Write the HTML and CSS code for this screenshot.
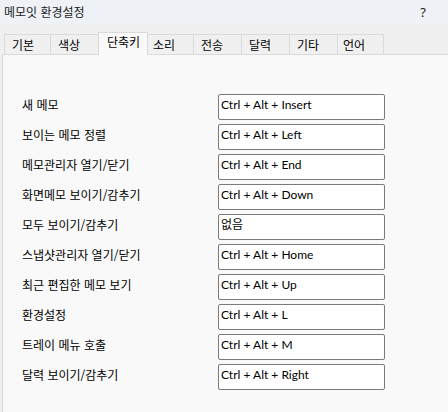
FILE: index.html
```html
<!DOCTYPE html>
<html lang="ko">
<head>
<meta charset="utf-8">
<title>메모잇 환경설정</title>
<link rel="stylesheet" href="styles.css">
</head>
<body>
<div class="window">
  <div class="titlebar">
    <span class="title">메모잇 환경설정</span>
    <span class="help">?</span>
  </div>
  <div class="tabarea">
    <div class="tabs">
      <div class="tab tab-first">기본</div>
      <div class="tab">색상</div>
      <div class="tab tab-active">단축키</div>
      <div class="tab tab-narrow">소리</div>
      <div class="tab">전송</div>
      <div class="tab">달력</div>
      <div class="tab">기타</div>
      <div class="tab tab-narrow">언어</div>
    </div>
    <div class="panel">
      <div class="rows">
        <div class="row"><span class="label">새 메모</span><div class="field">Ctrl + Alt + Insert</div></div>
        <div class="row"><span class="label">보이는 메모 정렬</span><div class="field">Ctrl + Alt + Left</div></div>
        <div class="row"><span class="label">메모관리자 열기/닫기</span><div class="field">Ctrl + Alt + End</div></div>
        <div class="row"><span class="label">화면메모 보이기/감추기</span><div class="field">Ctrl + Alt + Down</div></div>
        <div class="row"><span class="label">모두 보이기/감추기</span><div class="field">없음</div></div>
        <div class="row"><span class="label">스냅샷관리자 열기/닫기</span><div class="field">Ctrl + Alt + Home</div></div>
        <div class="row"><span class="label">최근 편집한 메모 보기</span><div class="field">Ctrl + Alt + Up</div></div>
        <div class="row"><span class="label">환경설정</span><div class="field">Ctrl + Alt + L</div></div>
        <div class="row"><span class="label">트레이 메뉴 호출</span><div class="field">Ctrl + Alt + M</div></div>
        <div class="row"><span class="label">달력 보이기/감추기</span><div class="field">Ctrl + Alt + Right</div></div>
      </div>
    </div>
  </div>
</div>
</body>
</html>
```

FILE: styles.css
```css
* { box-sizing: border-box; }
html, body {
  margin: 0;
  padding: 0;
  width: 448px;
  height: 412px;
  overflow: hidden;
}
body {
  font-family: "Noto Sans", "Noto Sans CJK KR", sans-serif;
  font-size: 12px;
  color: #000;
  background: #f0f0f0;
}
.window {
  display: flex;
  flex-direction: column;
  height: 412px;
}
.titlebar {
  height: 24px;
  background: #eef2f7;
  display: flex;
  align-items: center;
  justify-content: space-between;
  padding: 0 22px 1px 4px;
  font-family: "Noto Sans CJK KR", sans-serif;
  font-size: 12px;
  line-height: 16px;
  color: #1a1a1a;
}
.help {
  font-family: "Noto Sans", sans-serif;
  font-size: 13px;
}
.tabarea {
  flex: 1;
  display: flex;
  flex-direction: column;
  background: #f0f0f0;
  padding-top: 8px;
}
.tabs {
  display: flex;
  align-items: flex-end;
  height: 22px;
  padding-left: 4px;
  position: relative;
  z-index: 1;
}
.tab {
  width: 48px;
  height: 20px;
  padding-left: 7px;
  border: 1px solid #dadada;
  border-bottom: none;
  border-left: none;
  background: #f0f0f0;
  font-family: "Noto Sans CJK KR", sans-serif;
  font-size: 12px;
  line-height: 19px;
}
.tab-first {
  width: 47px;
  border-left: 1px solid #dadada;
}
.tab-narrow {
  width: 46px;
  padding-left: 5px;
}
.tab-active {
  width: 50px;
  height: 23px;
  margin-bottom: -1px;
  padding-left: 8px;
  background: #f9f9f9;
  line-height: 18px;
  border-left: 1px solid #dadada;
  margin-left: -1px;
}
.panel {
  flex: 1;
  margin-left: 2px;
  background: #f9f9f9;
  border-top: 1px solid #dadada;
  border-left: 1px solid #dadada;
  padding: 39px 0 0 19px;
}
.rows {
  display: flex;
  flex-direction: column;
  gap: 4px;
}
.row {
  display: flex;
  align-items: flex-start;
  height: 26px;
}
.label {
  width: 196px;
  padding-top: 3px;
  font-family: "Noto Sans CJK KR", sans-serif;
  font-size: 12px;
  line-height: 16px;
}
.field {
  width: 167px;
  height: 26px;
  background: #fff;
  border: 1px solid #7a7a7a;
  border-radius: 2px;
  padding: 2px 0 0 2px;
  font-family: "Lato", "Noto Sans CJK KR", sans-serif;
  font-size: 12px;
  line-height: 16px;
  white-space: nowrap;
}
```
